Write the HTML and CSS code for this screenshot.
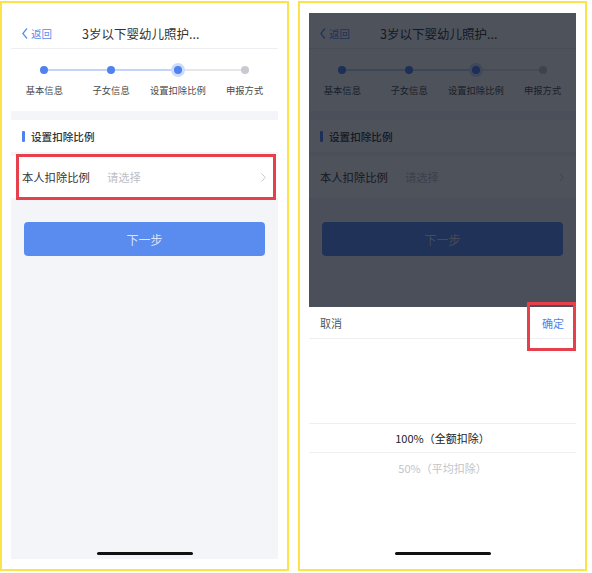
FILE: index.html
```html
<!DOCTYPE html>
<html lang="zh-CN">
<head>
    <meta charset="UTF-8">
    <meta name="viewport" content="width=device-width, initial-scale=1.0">
    <title>设置扣除比例</title>
    <link rel="stylesheet" href="styles.css">
</head>
<body>
    <div class="shots">
        <!-- 第一步：点击选择扣除比例 -->
        <div class="shot">
            <div class="phone">
                <header class="nav">
                    <span class="back">
                        <svg width="6" height="11" viewBox="0 0 6 11"><polyline points="5,0.5 0.8,5.5 5,10.5" fill="none" stroke="#5b8def" stroke-width="1.3"/></svg>
                        返回
                    </span>
                    <span class="title">3岁以下婴幼儿照护...</span>
                </header>
                <div class="steps">
                    <div class="step done"><span class="dot"></span><span class="label">基本信息</span></div>
                    <div class="step done"><span class="dot"></span><span class="label">子女信息</span></div>
                    <div class="step current"><span class="dot"></span><span class="label">设置扣除比例</span></div>
                    <div class="step"><span class="dot"></span><span class="label">申报方式</span></div>
                </div>
                <div class="content">
                    <div class="section-title">设置扣除比例</div>
                    <div class="field">
                        <span class="field-label">本人扣除比例</span>
                        <span class="field-value">请选择</span>
                        <svg class="arrow" width="5" height="9" viewBox="0 0 5 9"><polyline points="0.5,0.5 4.3,4.5 0.5,8.5" fill="none" stroke="#c8c8cc" stroke-width="1"/></svg>
                    </div>
                    <button class="next">下一步</button>
                </div>
                <div class="home-bar"></div>
                <div class="mark mark-field"></div>
            </div>
        </div>

        <!-- 第二步：在弹出的选择器中确定 -->
        <div class="shot">
            <div class="phone">
                <header class="nav">
                    <span class="back">
                        <svg width="6" height="11" viewBox="0 0 6 11"><polyline points="5,0.5 0.8,5.5 5,10.5" fill="none" stroke="#5b8def" stroke-width="1.3"/></svg>
                        返回
                    </span>
                    <span class="title">3岁以下婴幼儿照护...</span>
                </header>
                <div class="steps">
                    <div class="step done"><span class="dot"></span><span class="label">基本信息</span></div>
                    <div class="step done"><span class="dot"></span><span class="label">子女信息</span></div>
                    <div class="step current"><span class="dot"></span><span class="label">设置扣除比例</span></div>
                    <div class="step"><span class="dot"></span><span class="label">申报方式</span></div>
                </div>
                <div class="content">
                    <div class="section-title">设置扣除比例</div>
                    <div class="field">
                        <span class="field-label">本人扣除比例</span>
                        <span class="field-value">请选择</span>
                        <svg class="arrow" width="5" height="9" viewBox="0 0 5 9"><polyline points="0.5,0.5 4.3,4.5 0.5,8.5" fill="none" stroke="#c8c8cc" stroke-width="1"/></svg>
                    </div>
                    <button class="next">下一步</button>
                </div>
                <div class="mask"></div>
                <div class="picker">
                    <div class="picker-head">
                        <span class="cancel">取消</span>
                        <span class="confirm">确定</span>
                    </div>
                    <div class="wheel">
                        <div class="option selected">100%（全额扣除）</div>
                        <div class="option">50%（平均扣除）</div>
                    </div>
                </div>
                <div class="home-bar"></div>
                <div class="mark mark-confirm"></div>
            </div>
        </div>
    </div>
</body>
</html>
```

FILE: styles.css
```css
* {
    margin: 0;
    padding: 0;
    box-sizing: border-box;
}

body {
    background-color: #ffffff;
    font-family: "Noto Sans CJK SC", "Noto Sans", sans-serif;
    color: #333333;
}

.shots {
    display: flex;
    gap: 9px;
    padding-top: 1px;
}

.shot {
    border: 2px solid #fde34a;
    padding: 10px 9px;
}

.phone {
    position: relative;
    width: 267px;
    height: 546px;
    overflow: hidden;
    display: flex;
    flex-direction: column;
    background-color: #f4f5f9;
}

/* 顶部导航 */
.nav {
    height: 36px;
    padding: 5px 11px 0;
    display: flex;
    align-items: center;
    background-color: #ffffff;
    border-bottom: 1px solid #eceef2;
}

.back {
    display: flex;
    align-items: center;
    gap: 3px;
    font-size: 10.5px;
    color: #5b8def;
}

.title {
    margin-left: 30px;
    font-size: 12.5px;
    color: #333333;
}

/* 步骤条 */
.steps {
    height: 62px;
    display: grid;
    grid-template-columns: repeat(4, 1fr);
    background-color: #ffffff;
}

.step {
    position: relative;
    display: flex;
    flex-direction: column;
    align-items: center;
}

.step::after {
    content: "";
    position: absolute;
    top: 20px;
    left: 50%;
    width: 100%;
    height: 2px;
    background-color: #e6e7eb;
}

.step.done::after {
    background-color: #c2d5f8;
}

.step:last-child::after {
    display: none;
}

.dot {
    position: relative;
    z-index: 1;
    width: 8px;
    height: 8px;
    margin-top: 17px;
    border-radius: 50%;
    background-color: #c9c9cf;
}

.step.done .dot,
.step.current .dot {
    background-color: #4f82ec;
}

.step.current .dot {
    box-shadow: 0 0 0 3px #cddcfb;
}

.label {
    margin-top: 10px;
    font-size: 9.3px;
    line-height: 12px;
    color: #4a4a4a;
    white-space: nowrap;
}

/* 表单内容 */
.content {
    flex: 1;
    padding-top: 9px;
}

.section-title {
    height: 32px;
    padding-left: 11px;
    display: flex;
    align-items: center;
    background-color: #ffffff;
    font-size: 10.6px;
    font-weight: 500;
    color: #333333;
}

.section-title::before {
    content: "";
    width: 3px;
    height: 11px;
    margin-right: 6px;
    border-radius: 1px;
    background-color: #4f82ec;
}

.field {
    height: 42px;
    margin-top: 4px;
    padding: 0 12px 0 11px;
    display: flex;
    align-items: center;
    background-color: #ffffff;
    font-size: 11.3px;
}

.field-label {
    flex: 0 0 85px;
    color: #333333;
}

.field-value {
    flex: 1;
    color: #c0c0c4;
}

.next {
    display: block;
    width: 241px;
    height: 34px;
    margin: 24px auto 0;
    border: none;
    border-radius: 4px;
    background-color: #5a8bef;
    font-family: inherit;
    font-size: 12px;
    color: rgba(255, 255, 255, 0.78);
}

.home-bar {
    position: absolute;
    left: 50%;
    bottom: 4px;
    width: 96px;
    height: 3px;
    margin-left: -48px;
    border-radius: 2px;
    background-color: #111111;
    z-index: 7;
}

/* 弹出选择器 */
.mask {
    position: absolute;
    top: 0;
    left: 0;
    right: 0;
    bottom: 0;
    background-color: rgba(10, 15, 28, 0.72);
    z-index: 5;
}

.picker {
    position: absolute;
    left: 0;
    right: 0;
    bottom: 0;
    height: 252px;
    background-color: #ffffff;
    z-index: 6;
}

.picker-head {
    height: 32px;
    padding: 0 12px 0 11px;
    display: flex;
    justify-content: space-between;
    align-items: center;
    border-bottom: 1px solid #eeeff2;
    font-size: 11px;
}

.cancel {
    color: #555555;
}

.confirm {
    color: #4f82ec;
}

.wheel {
    padding-top: 84px;
}

.option {
    height: 30px;
    display: flex;
    justify-content: center;
    align-items: center;
    font-size: 11px;
    color: #c4c4c8;
}

.option.selected {
    border-top: 1px solid #eeeff2;
    border-bottom: 1px solid #eeeff2;
    color: #222222;
}

/* 红色标注框 */
.mark {
    position: absolute;
    border: 3px solid #e6404c;
    z-index: 8;
}

.mark-field {
    left: 5px;
    top: 141px;
    width: 260px;
    height: 46px;
}

.mark-confirm {
    left: 218px;
    top: 289px;
    width: 49px;
    height: 49px;
}
```
